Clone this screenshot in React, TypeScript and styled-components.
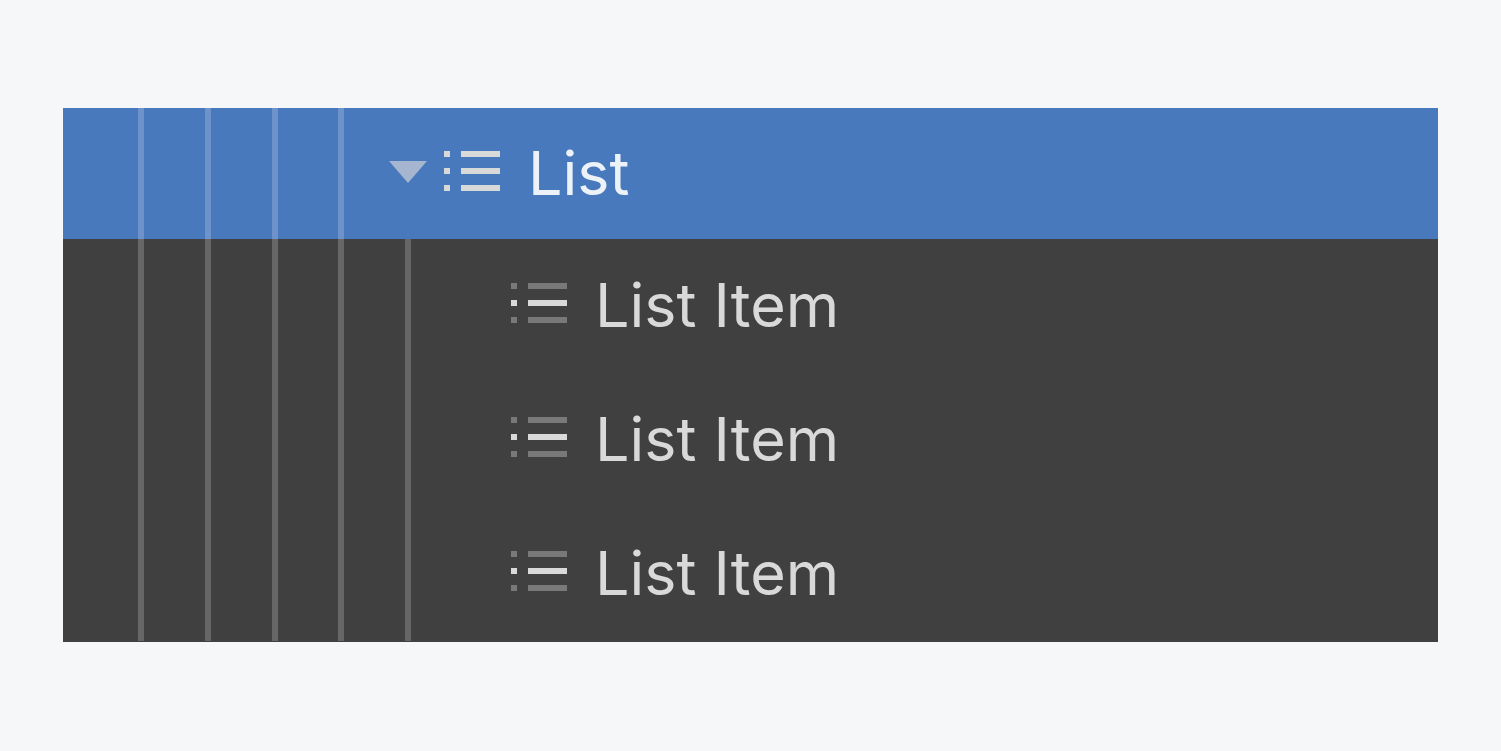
import React from "react";
import styled, { createGlobalStyle } from "styled-components";

const GlobalStyle = createGlobalStyle`
  * { box-sizing: border-box; }
  body { margin: 0; background: #f5f7f9; font-family: Inter, "Liberation Sans", sans-serif; }
`;

const Page = styled.main`
  min-height: 100vh;
  padding: 108px 63px;
`;

const Tree = styled.ul`
  list-style: none;
  margin: 0;
  padding: 0 0 1px;
  background: #404040;
`;

const Row = styled.li<{ $selected?: boolean }>`
  display: flex;
  align-items: stretch;
  height: ${(p) => (p.$selected ? 131 : 134)}px;
  padding-left: 75px;
  background: ${(p) => (p.$selected ? "#4979bd" : "transparent")};
  color: ${(p) => (p.$selected ? "#edf2f9" : "#d9d9d9")};
`;

const Guides = styled.span<{ $deep?: boolean }>`
  flex: none;
  display: flex;
  width: ${(p) => (p.$deep ? 334 : 267)}px;
`;

const Guide = styled.span<{ $selected?: boolean }>`
  flex: 1;
  border-left: 6px solid ${(p) => (p.$selected ? "#6e93cb" : "#666666")};
`;

const Toggle = styled.button`
  flex: none;
  display: flex;
  align-items: center;
  width: 38px;
  margin: 0 17px 0 -16px;
  padding: 0 0 4px;
  border: 0;
  background: none;
`;

const Item = styled.span<{ $nested?: boolean }>`
  display: flex;
  align-items: center;
  gap: 28px;
  margin-left: ${(p) => (p.$nested ? 39 : 0)}px;
  padding-bottom: 2px;
`;

const Icon = styled.svg`
  flex: none;
  margin-bottom: 4px;
`;

const Label = styled.span`
  font-size: 61px;
  line-height: 80px;
  white-space: nowrap;
`;

function ListIcon({ item = false }: { item?: boolean }) {
  return (
    <Icon width="56" height="40" viewBox="0 0 56 40" aria-hidden="true">
      <path d="M0 0h6v6H0zM17 0h39v6H17zM0 34h6v6H0zM17 34h39v6H17z" fill={item ? "#797979" : "#d9d9d9"} />
      <path d="M0 17h6v6H0zM17 17h39v6H17z" fill="#d9d9d9" />
    </Icon>
  );
}

export default function App() {
  return (
    <>
      <GlobalStyle />
      <Page>
        <Tree>
          <Row $selected>
            <Guides>
              {[0, 1, 2, 3].map((n) => <Guide key={n} $selected />)}
            </Guides>
            <Toggle type="button" aria-label="Collapse list" aria-expanded="true">
              <svg width="38" height="22" viewBox="0 0 38 22">
                <path d="M0 0h38L19 22z" fill="#a7b6d0" />
              </svg>
            </Toggle>
            <Item>
              <ListIcon />
              <Label>List</Label>
            </Item>
          </Row>
          {[0, 1, 2].map((n) => (
            <Row key={n}>
              <Guides $deep>
                {[0, 1, 2, 3, 4].map((g) => <Guide key={g} />)}
              </Guides>
              <Item $nested>
                <ListIcon item />
                <Label>List Item</Label>
              </Item>
            </Row>
          ))}
        </Tree>
      </Page>
    </>
  );
}
